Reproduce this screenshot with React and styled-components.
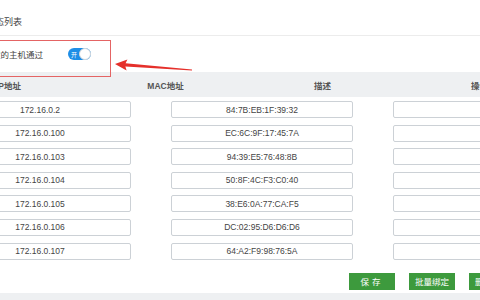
import React from 'react';
import styled, { createGlobalStyle } from 'styled-components';

const GlobalStyle = createGlobalStyle`
  html, body {
    margin: 0;
    padding: 0;
    background: #fff;
    overflow: hidden;
  }
  body {
    font-family: "Liberation Sans", "Noto Sans CJK SC", sans-serif;
    color: #333;
  }
`;

const Frame = styled.div`
  position: relative;
  width: 480px;
  height: 300px;
  overflow: hidden;
`;

const Page = styled.div`
  margin-left: -73px;
  width: 820px;
`;

const TitleBar = styled.div`
  height: 36px;
  box-sizing: border-box;
  padding: 15px 0 0 59px;
  border-bottom: 1px solid #ececec;
  font-size: 9px;
  color: #444;
`;

const OptionRow = styled.div`
  height: 36px;
  display: flex;
  align-items: center;
  gap: 25px;
`;

const OptionLabel = styled.span`
  width: 116px;
  text-align: right;
  font-size: 8.5px;
  color: #444;
  white-space: nowrap;
`;

const Toggle = styled.span`
  position: relative;
  width: 23px;
  height: 12px;
  border-radius: 6px;
  background: #1f8ee6;
  display: inline-flex;
  align-items: center;
  box-sizing: border-box;
  padding-left: 3px;
  color: #fff;
  font-size: 6px;
  &::after {
    content: '';
    position: absolute;
    right: 0;
    top: 0;
    width: 12px;
    height: 12px;
    box-sizing: border-box;
    border-radius: 50%;
    background: #fff;
    border: 1px solid #d4d8dc;
  }
`;

const HeadRow = styled.div`
  height: 25px;
  background: #eef0f2;
  display: grid;
  grid-template-columns: 3px repeat(5, 157px);
  align-items: center;
`;

const HeadCell = styled.div`
  text-align: center;
  font-size: 8.5px;
  font-weight: bold;
  color: #555;
  &:first-child {
    grid-column: 2;
  }
`;

const Body = styled.div`
  padding: 4px 0 0 2px;
  display: flex;
  flex-direction: column;
  gap: 6.6px;
`;

const Row = styled.div`
  display: grid;
  grid-template-columns: repeat(3, 222px);
`;

const Field = styled.div`
  margin: 0 20px;
  height: 17px;
  box-sizing: border-box;
  border: 1px solid #ccd1d6;
  border-radius: 2px;
  display: flex;
  align-items: center;
  justify-content: center;
  font-size: 8.5px;
  color: #444;
`;

const Actions = styled.div`
  display: flex;
  gap: 14px;
  padding: 13px 0 0 422px;
`;

const Button = styled.div`
  width: 46px;
  height: 17px;
  background: #3d9a3d;
  color: #fff;
  font-size: 8.5px;
  display: flex;
  align-items: center;
  justify-content: center;
  letter-spacing: ${p => (p.spaced ? '3px' : '0')};
  flex-shrink: 0;
`;

const Footer = styled.div`
  margin-top: 3px;
  height: 10px;
  background: #eef0f2;
`;

const Highlight = styled.div`
  position: absolute;
  left: -5px;
  top: 40px;
  width: 116px;
  height: 37px;
  box-sizing: border-box;
  border: 1px solid #e46464;
`;

const Arrow = styled.svg`
  position: absolute;
  left: 110px;
  top: 54px;
`;

const rows = [
  ['172.16.0.2', '84:7B:EB:1F:39:32'],
  ['172.16.0.100', 'EC:6C:9F:17:45:7A'],
  ['172.16.0.103', '94:39:E5:76:48:8B'],
  ['172.16.0.104', '50:8F:4C:F3:C0:40'],
  ['172.16.0.105', '38:E6:0A:77:CA:F5'],
  ['172.16.0.106', 'DC:02:95:D6:D6:D6'],
  ['172.16.0.107', '64:A2:F9:98:76:5A'],
];

const App = () => (
  <Frame>
    <GlobalStyle />
    <Page>
      <TitleBar>状态列表</TitleBar>
      <OptionRow>
        <OptionLabel>仅允许已绑定的主机通过</OptionLabel>
        <Toggle>开</Toggle>
      </OptionRow>
      <HeadRow>
        <HeadCell>IP地址</HeadCell>
        <HeadCell>MAC地址</HeadCell>
        <HeadCell>描述</HeadCell>
        <HeadCell>操作</HeadCell>
      </HeadRow>
      <Body>
        {rows.map(([ip, mac]) => (
          <Row key={ip}>
            <Field>{ip}</Field>
            <Field>{mac}</Field>
            <Field />
          </Row>
        ))}
      </Body>
      <Actions>
        <Button spaced>保存</Button>
        <Button>批量绑定</Button>
        <Button>删除绑定</Button>
      </Actions>
      <Footer />
    </Page>
    <Highlight />
    <Arrow width="90" height="22" viewBox="0 0 90 22">
      <polygon
        fill="#e5302b"
        points="5,10 17.4,5.4 15.6,9.2 82,15.4 82,16.6 15.4,12.6 16.6,16.4"
      />
    </Arrow>
  </Frame>
);

export default App;
